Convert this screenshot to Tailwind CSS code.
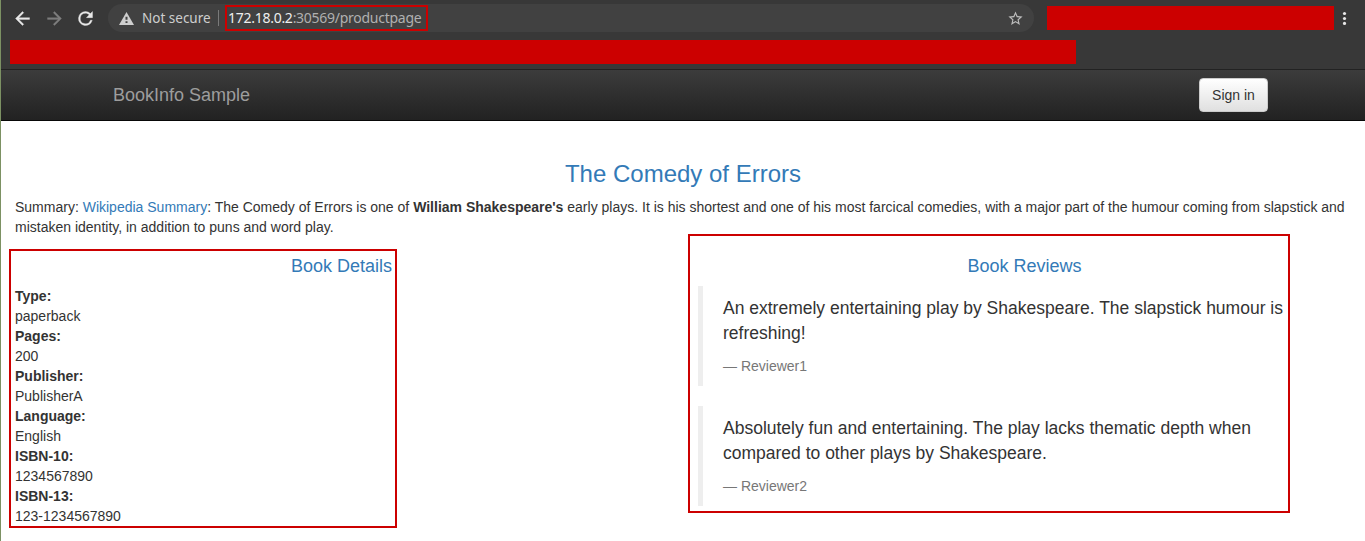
<!DOCTYPE html>
<html lang="en">
<head>
<meta charset="utf-8">
<title>Simple Bookstore App</title>
<script src="https://cdn.jsdelivr.net/npm/@tailwindcss/browser@4"></script>
</head>
<body class="relative w-[1365px] h-[541px] overflow-hidden bg-white font-['Liberation_Sans',Arial,sans-serif] text-[14px] leading-[20px] text-[#333]">
  <!-- Browser toolbar -->
  <div class="h-[69px] bg-[#383838] font-['Noto_Sans',sans-serif]">
    <div class="flex h-[36px] items-center pl-[11.5px]">
      <svg class="w-[21px] h-[21px] shrink-0" viewBox="0 0 24 24" fill="#e8e8e8" stroke="#e8e8e8" stroke-width="0.4"><path d="M20 11H7.83l5.59-5.59L12 4l-8 8 8 8 1.41-1.41L7.83 13H20v-2z"/></svg>
      <svg class="w-[21px] h-[21px] shrink-0 ml-[11px]" viewBox="0 0 24 24" fill="#7e7e7e" stroke="#7e7e7e" stroke-width="0.4"><path d="M12 4l-1.41 1.41L16.17 11H4v2h12.17l-5.58 5.59L12 20l8-8z"/></svg>
      <svg class="w-[21px] h-[21px] shrink-0 ml-[10.5px] mr-[0.5px]" viewBox="0 0 24 24" fill="#e8e8e8" stroke="#e8e8e8" stroke-width="0.4"><path d="M17.65 6.35A7.96 7.96 0 0 0 12 4a8 8 0 1 0 7.73 10h-2.08A6 6 0 1 1 12 6c1.66 0 3.14.69 4.22 1.78L13 11h7V4l-2.35 2.35z"/></svg>
      <div class="ml-[11.5px] flex h-[28px] w-[926px] shrink-0 items-center rounded-full bg-[#414141] pl-[11px] pr-[10px]">
        <svg class="w-[15px] h-[13px] shrink-0" viewBox="0 0 15 13"><path d="M7.5 0L15 13H0z" fill="#cecece"/><path d="M6.5 4.8h2v3H6.5zM6.5 9.2h2v1.8H6.5z" fill="#414141"/></svg>
        <span class="ml-[8px] w-[69px] shrink-0 whitespace-nowrap text-[13.5px] text-[#cecece]">Not secure</span>
        <span class="ml-[7px] h-[16px] w-px shrink-0 bg-[#7a7a7a]"></span>
        <span class="ml-[6px] flex h-[26px] w-[203px] shrink-0 items-center border-2 border-[#c00] pl-[1px] whitespace-nowrap text-[14px] tracking-[-0.27px] text-[#b0b0b0]"><span class="text-[#eee]">172.18.0.2</span>:30569/productpage</span>
        <svg class="ml-auto w-[17px] h-[17px] shrink-0" viewBox="0 0 24 24" fill="#bdbdbd"><path d="M22 9.24l-7.19-.62L12 2 9.19 8.63 2 9.24l5.46 4.73L5.82 21 12 17.27 18.18 21l-1.63-7.03L22 9.24zM12 15.4l-3.76 2.27 1-4.28-3.32-2.88 4.38-.38L12 6.1l1.71 4.04 4.38.38-3.32 2.88 1 4.28L12 15.4z"/></svg>
      </div>
      <div class="ml-[13px] h-[24px] w-[287px] shrink-0 bg-[#c00]"></div>
      <svg class="ml-[8px] w-[5px] h-[14px] shrink-0" viewBox="0 0 5 14" fill="#e8e8e8"><circle cx="2.5" cy="2.5" r="1.6"/><circle cx="2.5" cy="7.5" r="1.6"/><circle cx="2.5" cy="12.4" r="1.6"/></svg>
    </div>
    <div class="ml-[10px] mt-[4px] h-[24px] w-[1066px] bg-[#c00]"></div>
  </div>

  <!-- Navbar -->
  <nav class="flex h-[52px] items-center justify-between border-y border-t-[#222] border-b-[#080808] bg-linear-to-b from-[#3c3c3c] to-[#222] pl-[113px] pr-[97px]">
    <span class="text-[18px] text-[#9d9d9d]">BookInfo Sample</span>
    <button class="h-[34px] w-[69px] rounded-[4px] border border-[#ccc] bg-linear-to-b from-white to-[#e0e0e0] text-[14px] text-[#333]">Sign in</button>
  </nav>

  <main class="w-[1366px] px-[15px] pt-[40px]">
    <h3 class="mb-[10px] text-center text-[24px] leading-[26px] text-[#337ab7]">The Comedy of Errors</h3>
    <p class="mb-[19px]">Summary: <a class="text-[#337ab7]">Wikipedia Summary</a>: The Comedy of Errors is one of <b>William Shakespeare's</b> early plays. It is his shortest and one of his most farcical comedies, with a major part of the humour coming from slapstick and mistaken identity, in addition to puns and word play.</p>
    <div class="grid grid-cols-2 gap-[30px]">
      <section>
        <h4 class="mb-[10px] text-center text-[18px] leading-[20px] text-[#337ab7]">Book Details</h4>
        <dl>
          <dt class="font-bold">Type:</dt><dd>paperback</dd>
          <dt class="font-bold">Pages:</dt><dd>200</dd>
          <dt class="font-bold">Publisher:</dt><dd>PublisherA</dd>
          <dt class="font-bold">Language:</dt><dd>English</dd>
          <dt class="font-bold">ISBN-10:</dt><dd>1234567890</dd>
          <dt class="font-bold">ISBN-13:</dt><dd>123-1234567890</dd>
        </dl>
      </section>
      <section>
        <h4 class="mb-[10px] text-center text-[18px] leading-[20px] text-[#337ab7]">Book Reviews</h4>
        <blockquote class="mb-[20px] border-l-5 border-[#eee] px-[20px] py-[10px] text-[17.5px] leading-[25px]">
          <p class="mb-[10px] w-[580px]">An extremely entertaining play by Shakespeare. The slapstick humour is refreshing!</p>
          <small class="block text-[14px] leading-[20px] text-[#777]">— Reviewer1</small>
        </blockquote>
        <blockquote class="border-l-5 border-[#eee] px-[20px] py-[10px] text-[17.5px] leading-[25px]">
          <p class="mb-[10px] w-[580px]">Absolutely fun and entertaining. The play lacks thematic depth when compared to other plays by Shakespeare.</p>
          <small class="block text-[14px] leading-[20px] text-[#777]">— Reviewer2</small>
        </blockquote>
      </section>
    </div>
  </main>

  <!-- Highlight frames over the page -->
  <div class="absolute left-[9px] top-[249px] h-[279px] w-[388px] border-2 border-[#c00]"></div>
  <div class="absolute left-[688px] top-[234px] h-[279px] w-[602px] border-2 border-[#c00]"></div>
  <div class="absolute left-0 top-0 h-full w-px bg-[#7c9163]"></div>
</body>
</html>
